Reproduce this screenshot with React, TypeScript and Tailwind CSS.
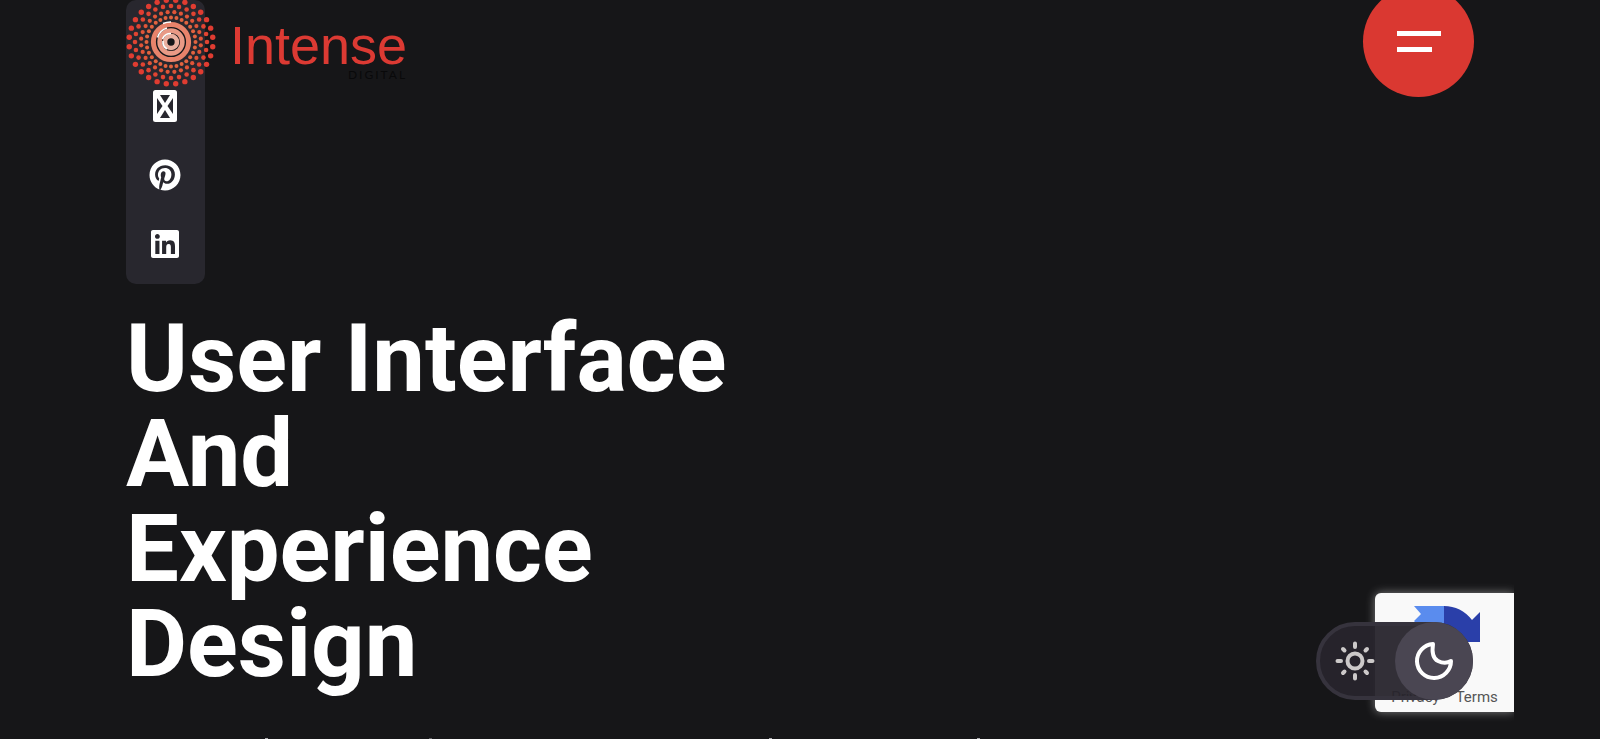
import { FaPinterest, FaLinkedin } from "react-icons/fa";

type Ring = { radius: number; size: number; color: string; phase: number };

const rings: Ring[] = [
  { radius: 42, size: 2.7, color: "#e03c31", phase: 0.5 },
  { radius: 36, size: 2.3, color: "#e04432", phase: 0 },
  { radius: 30, size: 2.1, color: "#e05538", phase: 0.5 },
  { radius: 24.5, size: 2, color: "#e2633f", phase: 0 },
];

const DOTS = 28;

function Burst() {
  return (
    <svg viewBox="-45 -46 92 92" className="size-[92px] shrink-0" aria-hidden="true">
      {rings.map((ring) =>
        Array.from({ length: DOTS }, (_, i) => {
          const a = ((i + ring.phase) / DOTS) * Math.PI * 2 + Math.PI / 2;
          return (
            <circle
              key={`${ring.radius}-${i}`}
              cx={ring.radius * Math.cos(a)}
              cy={ring.radius * Math.sin(a)}
              r={ring.size}
              fill={ring.color}
            />
          );
        }),
      )}
      <circle r="20" fill="#17171a" />
      <circle r="17.6" fill="none" stroke="#e8836b" strokeWidth="5" />
      <circle r="11.4" fill="none" stroke="#e99a86" strokeWidth="4.6" />
      <circle r="6" fill="none" stroke="#eab0a0" strokeWidth="4.6" />
      <path
        d="M-13.500-4.500A14.500 14.500 0 0 1-4-14M-8-18.500A20 20 0 0 1 0-20M-8.500-3A9 9 0 0 1 0-8.500M-8-1A8 8 0 0 0-4 7"
        fill="none"
        stroke="#fff"
        strokeWidth="1.6"
      />
    </svg>
  );
}

export default function App() {
  return (
    <div className="relative h-screen overflow-hidden bg-[#161618] px-[126px] font-['Roboto',sans-serif] text-white">
      <header className="absolute inset-x-0 top-0 z-10 flex items-start justify-between px-[126px]">
        <a href="#home" aria-label="Intense Digital" className="-mt-1 flex items-start font-['Liberation_Sans',sans-serif]">
          <Burst />
          <span className="flex flex-col items-end pt-[25px] pl-3">
            <span className="text-[54px] leading-[48px] text-[#dc3a33]">Intense</span>
            <span className="font-['Lato',sans-serif] text-[12px] leading-3 tracking-[2px] text-[#09090a]">DIGITAL</span>
          </span>
        </a>
        <button aria-label="Open menu" className="-mt-[14px] flex size-[111px] flex-col justify-center gap-[11px] rounded-full bg-[#da3831] pl-[34px]">
          <span className="h-[5px] w-11 bg-white" />
          <span className="h-[5px] w-[35px] bg-white" />
        </button>
      </header>

      <nav aria-label="Social" className="flex h-[284px] w-[79px] flex-col items-center justify-end gap-[37px] rounded-[10px] bg-[#28272e] pr-px pb-6">
        <a href="#profile" aria-label="Profile">
          <svg viewBox="0 0 24 32" className="h-8 w-6" aria-hidden="true">
            <rect width="24" height="32" rx="2.5" fill="#fff" />
            <path d="M7 5H17L12 13ZM4 8L9.500 16L4 24ZM20 8L14.500 16L20 24ZM7 28H17L12 20Z" fill="#28272e" />
          </svg>
        </a>
        <a href="#pinterest" aria-label="Pinterest"><FaPinterest className="size-8" /></a>
        <a href="#linkedin" aria-label="LinkedIn"><FaLinkedin className="size-8" /></a>
      </nav>

      <h1 className="mt-7 text-[94px] leading-[95px] font-bold">
        User Interface<br />And<br />Experience<br />Design
      </h1>

      <svg className="absolute bottom-0 left-[126px] h-px w-[860px]" viewBox="0 0 860 1" fill="#a9a9ad" aria-hidden="true">
        <path d="M139 0h3v1h-3zM643 0h3v1h-3zM851 0h3v1h-3z" />
        <path d="M303 0h3v1h-3z" opacity="0.5" />
      </svg>

      <aside className="absolute right-[86px] bottom-0 overflow-hidden pt-4 pb-[27px] pl-4">
        <div className="flex h-[119px] w-[139px] flex-col items-center justify-between rounded-l-[6px] bg-[#f9f9f9] pt-3 pb-1 shadow-[0_0_10px_#808080]">
          <svg viewBox="0 0 66 38" className="ml-1 h-[38px] w-[66px]" aria-hidden="true">
            <path d="M0 1H30V37H20L0 16L7 9Z" fill="#5a8cee" />
            <path d="M30 1Q47 1 58 15L66 7V37H38L30 22Z" fill="#2a3fa9" />
          </svg>
          <p className="flex gap-4 text-[15px] leading-[22px] text-[#555]">
            <a href="#privacy">Privacy</a>
            <a href="#terms">Terms</a>
          </p>
        </div>
      </aside>

      <div className="absolute right-[127px] bottom-[39px] flex h-[78px] w-[157px] items-center justify-between rounded-full border-4 border-[#36333d] bg-[#27242c]/95">
        <button aria-label="Light mode" className="ml-[15px]">
          <svg viewBox="-20 -20 40 40" className="size-10" fill="none" stroke="#ccc9c9" strokeWidth="4" strokeLinecap="round" aria-hidden="true">
            <circle r="7.500" />
            <path d="M0-17.500V-14M0 14V17.500M-17.500 0H-14M14 0H17.500M-12-12L-10.500-10.500M12-12L10.500-10.500M-12 12L-10.500 10.500M12 12L10.500 10.500" />
          </svg>
        </button>
        <button aria-label="Dark mode" className="-mr-1 flex size-[78px] items-center justify-center rounded-full bg-[#4a4652]">
          <svg viewBox="0 0 40 40" className="size-10" fill="none" stroke="#fff" strokeWidth="4" strokeLinejoin="round" aria-hidden="true">
            <path d="M19 3A17 17 0 1 0 37 20Q31 23.500 24 20T19 3Z" />
          </svg>
        </button>
      </div>
    </div>
  );
}
